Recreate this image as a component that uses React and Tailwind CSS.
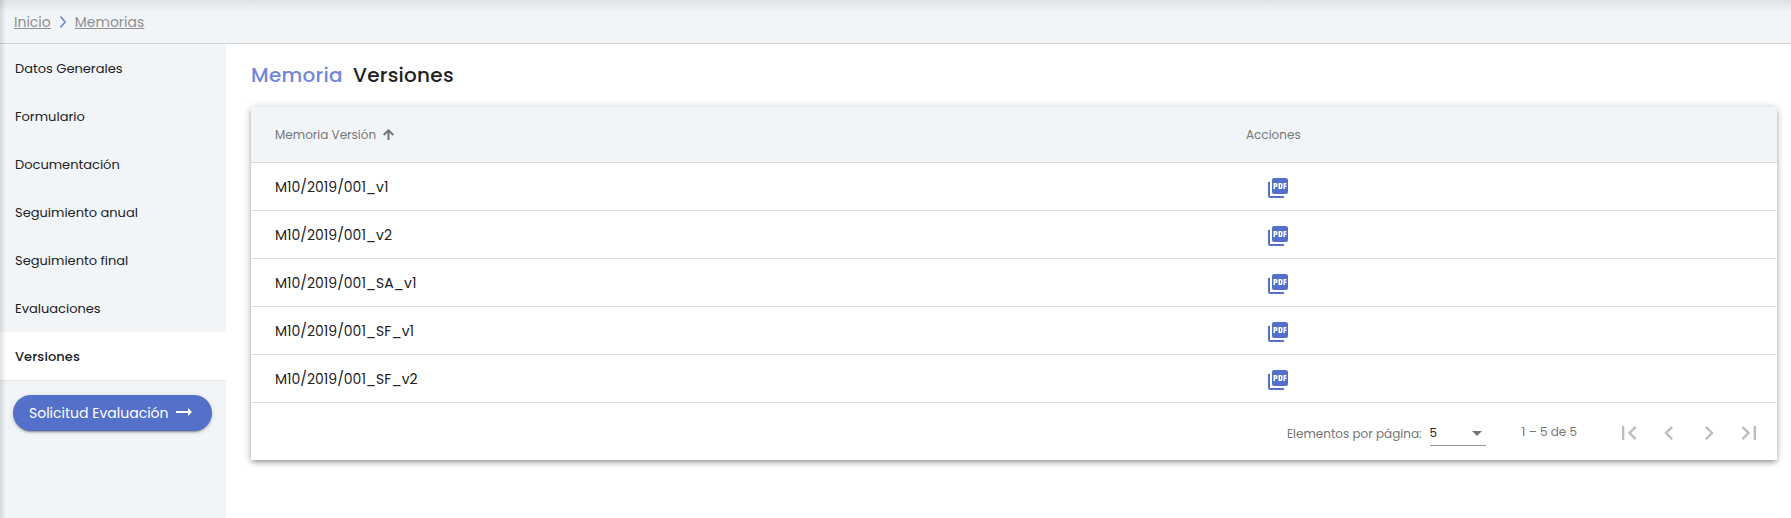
import {
  MdPictureAsPdf,
  MdFirstPage,
  MdChevronLeft,
  MdChevronRight,
  MdLastPage,
} from "react-icons/md";

const menu = [
  "Datos Generales",
  "Formulario",
  "Documentación",
  "Seguimiento anual",
  "Seguimiento final",
  "Evaluaciones",
];

const versions = [
  "M10/2019/001_v1",
  "M10/2019/001_v2",
  "M10/2019/001_SA_v1",
  "M10/2019/001_SF_v1",
  "M10/2019/001_SF_v2",
];

const pagerIcons = [MdFirstPage, MdChevronLeft, MdChevronRight, MdLastPage];

function Breadcrumb() {
  return (
    <header className="flex h-11 shrink-0 items-center border-b border-[#d0d4d7] bg-[#f1f5f8] pt-px pl-3.5 text-sm text-[#8f8f91]">
      <a className="underline">Inicio</a>
      <svg className="mr-[9px] ml-[9px] h-3 w-1.5" viewBox="0 0 6 12" fill="none">
        <path d="M0.6 0.6 5.2 6 0.6 11.4" stroke="#7088d6" strokeWidth="1.7" />
      </svg>
      <a className="underline">Memorias</a>
    </header>
  );
}

function Sidebar() {
  return (
    <aside className="w-[226px] shrink-0 bg-[#f1f5f8] text-[13px] text-[#212224]">
      <nav>
        {menu.map((label) => (
          <div key={label} className="flex h-12 items-center pt-0.5 pl-[15px]">
            {label}
          </div>
        ))}
        <div className="flex h-[49px] items-center border-b border-[#e2e4e8] bg-white pt-0.5 pl-[15px] font-medium tracking-[0.1px]">
          Versiones
        </div>
      </nav>
      <button className="mt-3.5 ml-[13px] flex h-9 w-[199px] items-center rounded-full bg-[#5470c9] pl-4 text-sm text-white shadow-[0_3px_1px_-2px_rgba(0,0,0,0.2),0_2px_2px_0_rgba(0,0,0,0.14),0_1px_5px_0_rgba(0,0,0,0.12)]">
        <span>Solicitud Evaluación</span>
        <svg className="mb-0.5 ml-[3px] h-6 w-6" viewBox="0 0 24 24" fill="currentColor">
          <path d="M16 11H4v2h12v3l4-4-4-4z" />
        </svg>
      </button>
    </aside>
  );
}

function Paginator() {
  return (
    <div className="flex h-[57px] items-center justify-end pt-0.5 pr-2 text-xs text-[#757575]">
      <span className="mt-0.5">Elementos por página:</span>
      <div className="mt-px ml-2 flex h-[25px] w-14 items-center justify-between border-b border-[#949494] pr-1">
        <span className="text-[#212121]">5</span>
        <svg className="mt-px h-[5px] w-2.5" viewBox="0 0 10 5" fill="#757575">
          <path d="M0 0h10L5 5z" />
        </svg>
      </div>
      <span className="mb-0.5 ml-9">1 – 5 de 5</span>
      <div className="ml-8 flex text-[#bdbdbd]">
        {pagerIcons.map((Icon, i) => (
          <div key={i} className="flex h-10 w-10 items-center justify-center">
            <Icon className="h-7 w-7" />
          </div>
        ))}
      </div>
    </div>
  );
}

function VersionsTable() {
  return (
    <section className="mt-[17px] bg-white shadow-[0_3px_5px_-1px_rgba(0,0,0,0.3),0_1px_8px_0_rgba(0,0,0,0.22)]">
      <div className="flex h-14 items-center border-b border-[#d3d6d9] bg-[#f1f5f8] pl-6 text-xs text-[#777879]">
        <div className="flex w-[971px] items-center">
          <span>Memoria Versión</span>
          <svg className="ml-[7px] h-[11px] w-[11px]" viewBox="0 0 11 11" fill="none" stroke="#757575" strokeWidth="2">
            <path d="M5.5 11V1.4M0.7 6 5.5 1.3 10.3 6" />
          </svg>
        </div>
        <span>Acciones</span>
      </div>
      {versions.map((name) => (
        <div key={name} className="flex h-12 items-center border-b border-[#e0e0e0] pl-6 text-sm text-[#212121]">
          <span className="w-[991px]">{name}</span>
          <MdPictureAsPdf className="mt-0.5 h-6 w-6 text-[#5470c9]" />
        </div>
      ))}
      <Paginator />
    </section>
  );
}

export default function App() {
  return (
    <div className="relative flex h-[518px] flex-col overflow-hidden bg-white font-[Poppins,Inter,sans-serif]">
      <Breadcrumb />
      <div className="flex flex-1">
        <Sidebar />
        <main className="flex-1 pt-4 pr-3.5 pl-[25px]">
          <h1 className="flex h-[30px] items-center text-xl font-medium tracking-[0.25px]">
            <span className="w-[102px] text-[#7088d6]">Memoria</span>
            <span className="text-[#212121]">Versiones</span>
          </h1>
          <VersionsTable />
        </main>
      </div>
      <div className="pointer-events-none absolute inset-x-0 top-0 h-3 bg-linear-to-b from-black/8 to-transparent" />
      <div className="pointer-events-none absolute inset-y-0 left-0 w-1.5 bg-linear-to-r from-black/12 to-transparent" />
    </div>
  );
}
